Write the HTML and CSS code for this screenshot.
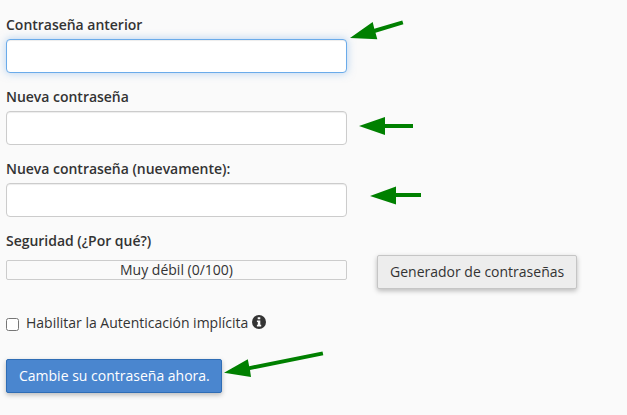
FILE: index.html
```html
<!DOCTYPE html>
<html lang="es">
<head>
<meta charset="utf-8">
<title>Cambiar contraseña</title>
<link rel="stylesheet" href="styles.css">
</head>
<body>
<form class="form">
  <div class="field">
    <label class="label" for="old">Contraseña anterior</label>
    <input class="input input-active" id="old" type="password">
  </div>
  <div class="field">
    <label class="label" for="new">Nueva contraseña</label>
    <input class="input" id="new" type="password">
  </div>
  <div class="field">
    <label class="label" for="again">Nueva contraseña (nuevamente):</label>
    <input class="input" id="again" type="password">
  </div>
  <div class="label">Seguridad (¿Por qué?)</div>
  <div class="strength">
    <div class="meter">Muy débil (0/100)</div>
    <button class="btn" type="button">Generador de contraseñas</button>
  </div>
  <div class="option">
    <input class="check" id="digest" type="checkbox">
    <label for="digest">Habilitar la Autenticación implícita</label>
    <svg class="info" viewBox="0 0 14 14"><circle cx="7" cy="7" r="7"/><path d="M5.7 2.200h2.600v2H5.700zM4.900 5.400h3.400v4.300h.9v1.700H4.900V9.700h.9V7.100h-.9z"/></svg>
  </div>
  <button class="btn btn-primary" type="button">Cambie su contraseña ahora.</button>
</form>
<svg class="arrows" viewBox="0 0 627 415">
  <path d="M350 38 372.700 22 374.300 28.800 402.300 20.500 403.400 24.300 375.500 32.700 377.300 39.300Z"/>
  <path d="M359 126 385 117V124H413V128H385V135Z"/>
  <path d="M370 196 396 186.500V193H421V197H396V204.500Z"/>
  <path d="M224 372.700 247.800 359.300 249.200 366.200 322.500 351.500 323.300 355.300 250 370 251 377Z"/>
</svg>
</body>
</html>
```
FILE: styles.css
```css
* {
  box-sizing: border-box;
}

body {
  margin: 0;
  height: 415px;
  overflow: hidden;
  position: relative;
  background: #fafafa;
  color: #333;
  font: 14px/20px "Open Sans", sans-serif;
}

.form {
  padding: 15px 6px 0;
}

.field {
  margin-bottom: 14px;
}

.label {
  display: block;
  font-weight: 600;
  letter-spacing: -.02px;
}

.input {
  display: block;
  width: 341px;
  height: 34px;
  margin-top: 4px;
  padding: 6px 12px;
  border: 1px solid #ccc;
  border-radius: 4px;
  background: #fff;
  box-shadow: inset 0 1px 1px rgba(0, 0, 0, .075);
  outline: none;
}

.input-active {
  border-color: #6aabea;
  box-shadow: inset 0 1px 1px rgba(0, 0, 0, .075), 0 0 8px rgba(106, 165, 230, .5);
}

.strength {
  display: flex;
  align-items: flex-start;
  gap: 30px;
  margin-top: 4px;
}

.meter {
  width: 341px;
  height: 20px;
  margin-top: 5px;
  border: 1px solid #ccc;
  border-radius: 2px;
  line-height: 18px;
  text-align: center;
}

.btn {
  display: block;
  width: 200px;
  height: 34px;
  padding: 0 0 0 12px;
  border: 1px solid #c5c5c5;
  border-radius: 2px;
  background: #ededed;
  color: #333;
  font: inherit;
  text-align: left;
  white-space: nowrap;
  box-shadow: 0 2px 5px rgba(0, 0, 0, .26);
}

.btn-primary {
  width: 216px;
  margin-top: 26px;
  border-color: #2f6db5;
  background: #4a86cf;
  color: #fff;
}

.option {
  display: flex;
  align-items: flex-start;
  margin-top: 24px;
}

.check {
  width: 13px;
  height: 13px;
  margin: 5px 7px 0 0;
}

.info {
  width: 14px;
  height: 14px;
  margin: 2px 0 0 4px;
}

.info circle {
  fill: #333;
}

.info path {
  fill: #fafafa;
}

.arrows {
  position: absolute;
  inset: 0;
  width: 627px;
  height: 415px;
  fill: #008000;
  pointer-events: none;
}
```
